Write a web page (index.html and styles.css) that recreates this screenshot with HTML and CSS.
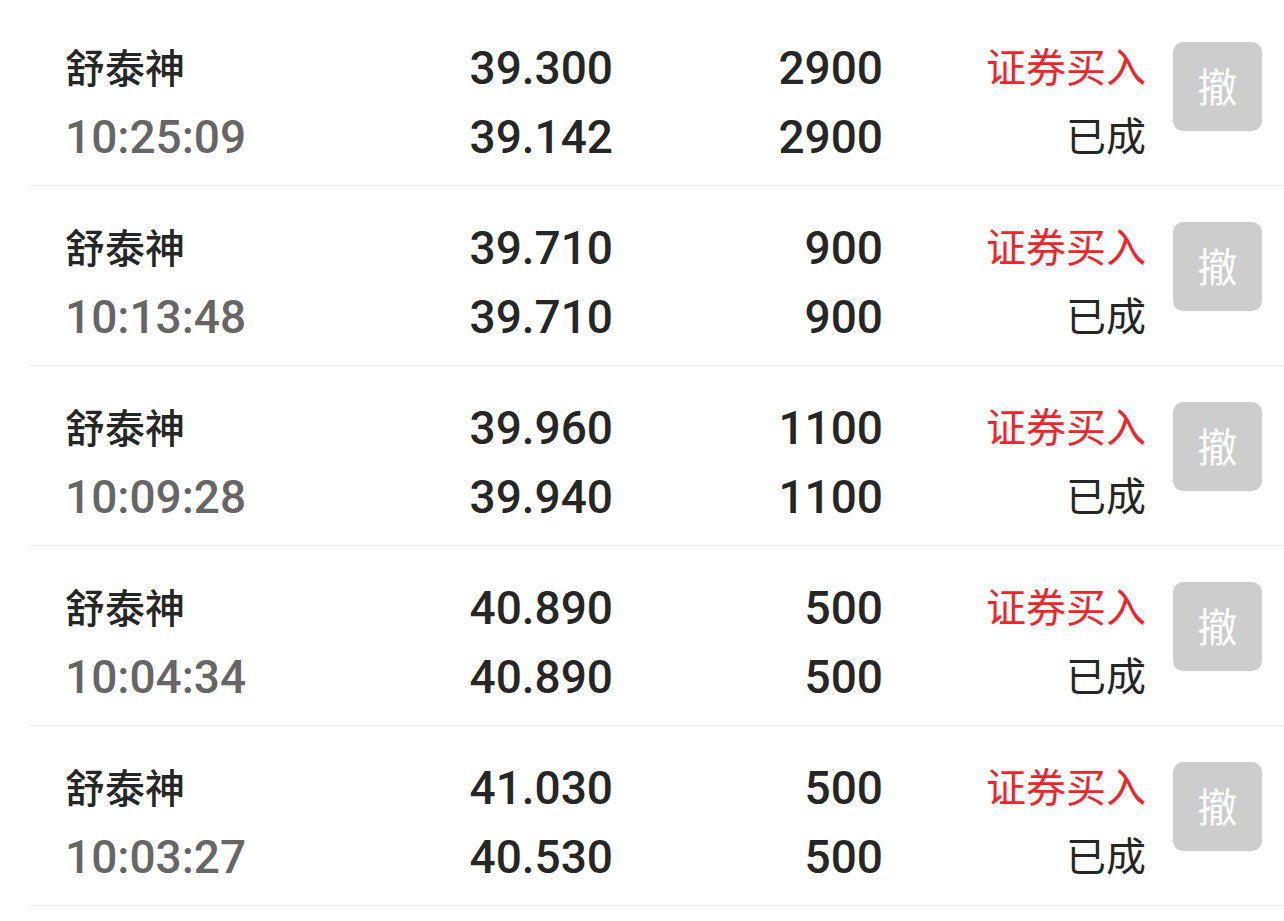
FILE: index.html
```html
<!DOCTYPE html>
<html lang="zh-CN">
<head>
<meta charset="utf-8">
<title>委托列表</title>
<link rel="stylesheet" href="styles.css">
</head>
<body>
<div class="list">
  <div class="row">
    <div class="cell name"><div class="l1 cjk">舒泰神</div><div class="l2 time">10:25:09</div></div>
    <div class="cell num"><div class="l1">39.300</div><div class="l2">39.142</div></div>
    <div class="cell num"><div class="l1">2900</div><div class="l2">2900</div></div>
    <div class="cell status"><div class="l1 buy">证券买入</div><div class="l2">已成</div></div>
    <div class="btn">撤</div>
  </div>
  <div class="row">
    <div class="cell name"><div class="l1 cjk">舒泰神</div><div class="l2 time">10:13:48</div></div>
    <div class="cell num"><div class="l1">39.710</div><div class="l2">39.710</div></div>
    <div class="cell num"><div class="l1">900</div><div class="l2">900</div></div>
    <div class="cell status"><div class="l1 buy">证券买入</div><div class="l2">已成</div></div>
    <div class="btn">撤</div>
  </div>
  <div class="row">
    <div class="cell name"><div class="l1 cjk">舒泰神</div><div class="l2 time">10:09:28</div></div>
    <div class="cell num"><div class="l1">39.960</div><div class="l2">39.940</div></div>
    <div class="cell num"><div class="l1">1100</div><div class="l2">1100</div></div>
    <div class="cell status"><div class="l1 buy">证券买入</div><div class="l2">已成</div></div>
    <div class="btn">撤</div>
  </div>
  <div class="row">
    <div class="cell name"><div class="l1 cjk">舒泰神</div><div class="l2 time">10:04:34</div></div>
    <div class="cell num"><div class="l1">40.890</div><div class="l2">40.890</div></div>
    <div class="cell num"><div class="l1">500</div><div class="l2">500</div></div>
    <div class="cell status"><div class="l1 buy">证券买入</div><div class="l2">已成</div></div>
    <div class="btn">撤</div>
  </div>
  <div class="row">
    <div class="cell name"><div class="l1 cjk">舒泰神</div><div class="l2 time">10:03:27</div></div>
    <div class="cell num"><div class="l1">41.030</div><div class="l2">40.530</div></div>
    <div class="cell num"><div class="l1">500</div><div class="l2">500</div></div>
    <div class="cell status"><div class="l1 buy">证券买入</div><div class="l2">已成</div></div>
    <div class="btn">撤</div>
  </div>
</div>
</body>
</html>
```
FILE: styles.css
```css
html, body {
  margin: 0;
  padding: 0;
  background: #ffffff;
}
body {
  font-family: Roboto, "Noto Sans CJK SC", sans-serif;
  color: #262626;
}
.list {
  padding-top: 6px;
  margin-left: 30px;
}
.row {
  display: grid;
  grid-template-columns: 300px 248px 270px 263px 89px;
  height: 180px;
  border-bottom: 1px solid #ededed;
  padding-left: 35px;
  box-sizing: border-box;
}
.cell {
  padding-top: 28px;
}
.l1, .l2 {
  height: 69px;
  line-height: 69px;
  white-space: nowrap;
}
.num {
  text-align: right;
  font-size: 46px;
  font-weight: 500;
}
.name .cjk {
  font-family: "Noto Sans CJK SC", sans-serif;
  font-size: 40px;
  font-weight: 500;
  line-height: 65px;
}
.time {
  font-size: 46px;
  font-weight: 500;
  color: #666666;
}
.status {
  text-align: right;
  font-family: "Noto Sans CJK SC", sans-serif;
  font-size: 40px;
  font-weight: 400;
}
.status .l1, .status .l2 {
  line-height: 63px;
}
.buy {
  color: #f0242a;
}
.btn {
  margin-left: 27px;
  margin-top: 36px;
  width: 89px;
  height: 89px;
  border-radius: 10px;
  background: #cdcdcd;
  color: #ffffff;
  font-family: "Noto Sans CJK SC", sans-serif;
  font-size: 40px;
  line-height: 86px;
  text-align: center;
}
```
